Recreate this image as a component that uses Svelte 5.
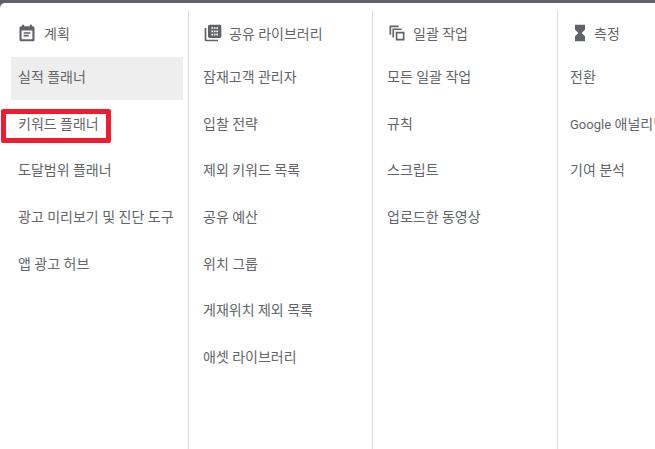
<script>
  const columns = [
    { title: '계획', icon: 'cal', w: 189, items: ['실적 플래너', '키워드 플래너', '도달범위 플래너', '광고 미리보기 및 진단 도구', '앱 광고 허브'] },
    { title: '공유 라이브러리', icon: 'lib', w: 184, items: ['잠재고객 관리자', '입찰 전략', '제외 키워드 목록', '공유 예산', '위치 그룹', '게재위치 제외 목록', '애셋 라이브러리'] },
    { title: '일괄 작업', icon: 'copy', w: 185, items: ['모든 일괄 작업', '규칙', '스크립트', '업로드한 동영상'] },
    { title: '측정', icon: 'glass', w: 97, items: ['전환', 'Google 애널리틱스', '기여 분석'] }
  ];
</script>

<div class="page">
  <div class="topbar"></div>
  <div class="panel">
    {#each columns as col, c}
      <section class="col" class:first={c === 0} class:last={c === 3} style="width:{col.w}px">
        <header class="head">
          <svg class="icon" viewBox="0 0 24 24" width="20" height="20" fill="#5f6368">
            {#if col.icon === 'cal'}
              <path fill-rule="evenodd" d="M19 4h-1V2h-2.5v2h-7V2H6v2H5C3.9 4 3 4.9 3 6v14c0 1.100.9 2 2 2h14c1.100 0 2-.9 2-2V6c0-1.100-.9-2-2-2zm-.5 15.500h-13V9h13v10.500zM8 11h8v2H8zm0 3.200h6v2H8z"/>
            {:else if col.icon === 'lib'}
              <path fill-rule="evenodd" d="M4 6H2v14c0 1.100.9 2 2 2h14v-2H4V6zm16-4H8c-1.100 0-2 .9-2 2v12c0 1.100.9 2 2 2h12c1.100 0 2-.9 2-2V4c0-1.100-.9-2-2-2zM10 5h2v2h-2zm3 0h2v2h-2zm3 0h2v2h-2zm-6 4h2v2h-2zm3 0h2v2h-2zm3 0h2v2h-2zm-6 4h2v2h-2zm3 0h2v2h-2zm3 0h2v2h-2z"/>
            {:else if col.icon === 'copy'}
              <path fill-rule="evenodd" d="M3 3h11v2H5v9H3V5zM6.500 6.500h11v2h-9v9h-2zM10.500 10.500H21V21H10.500zm2 2V19H19v-6.500z"/>
            {:else}
              <path d="M6 2h12v6l-4 4 4 4v6H6v-6l4-4-4-4z"/>
            {/if}
          </svg>
          <span>{col.title}</span>
        </header>
        <ul>
          {#each col.items as item}
            <li class:active={item === '실적 플래너'}>
              {#if item.startsWith('Google')}<span class="latin">Google</span> 애널리틱스{:else}{item}{/if}
            </li>
          {/each}
        </ul>
        {#if c === 0}
          <div class="highlight"></div>
        {/if}
      </section>
    {/each}
  </div>
</div>

<style>
  :global(body) { margin: 0; background: #fff; }
  .page {
    width: 655px;
    height: 449px;
    overflow: hidden;
    display: flex;
    flex-direction: column;
    background: #5f6368;
    font-family: Roboto, "Noto Sans CJK KR", sans-serif;
    color: #62666a;
    font-size: 14px;
  }
  .topbar { height: 3px; flex: none; }
  .panel {
    flex: 1;
    display: flex;
    padding-top: 7px;
    background: #fff;
    border-top-left-radius: 5px;
  }
  .col {
    position: relative;
    box-sizing: border-box;
    flex: none;
    border-right: 1px solid #dadce0;
    white-space: nowrap;
    overflow: hidden;
  }
  .col.last { border-right: 0; }
  .col.last ul { padding-left: 0; }
  .col.last li { padding-left: 12px; }
  .col.last .head { padding-left: 12px; gap: 4px; }
  .head {
    display: flex;
    align-items: center;
    height: 47px;
    box-sizing: border-box;
    padding: 0 0 2px 14px;
    gap: 6px;
  }
  .col.first .head { padding-left: 17px; gap: 7px; }
  .icon { flex: none; }
  ul {
    list-style: none;
    margin: 0;
    padding: 0 5px 0 0;
  }
  .col.first ul { padding-left: 11px; }
  li {
    height: 43px;
    margin-bottom: 3.67px;
    line-height: 41px;
    padding-left: 14px;
  }
  .col.first li { padding-left: 7px; }
  li.active { background: #eeeeee; }
  .latin { font-size: 13px; }
  .highlight {
    position: absolute;
    left: 1px;
    top: 99px;
    width: 110px;
    height: 34px;
    box-sizing: border-box;
    border: 5px solid #ee1c2e;
    border-radius: 2px;
  }
</style>
